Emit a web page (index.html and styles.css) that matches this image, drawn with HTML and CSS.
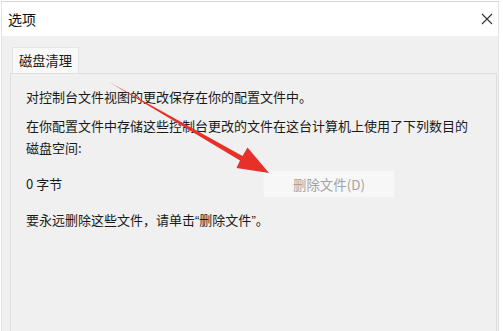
FILE: index.html
```html
<!DOCTYPE html>
<html lang="zh-CN">
<head>
    <meta charset="UTF-8">
    <title>选项</title>
    <link rel="stylesheet" href="styles.css">
</head>
<body>
    <div class="window">
        <div class="titlebar">
            <span class="title">选项</span>
            <svg class="close" width="12" height="12" viewBox="0 0 12 12">
                <path d="M1 1 L11 11 M11 1 L1 11" stroke="#333" stroke-width="1.1" fill="none"/>
            </svg>
        </div>

        <div class="content">
            <div class="tabs">
                <div class="tab">磁盘清理</div>
            </div>
            <div class="panel">
                <p>对控制台文件视图的更改保存在你的配置文件中。</p>
                <p class="gap">在你配置文件中存储这些控制台更改的文件在这台计算机上使用了下列数目的磁盘空间:</p>
                <div class="size-row">
                    <span>0 字节</span>
                    <button disabled>删除文件(D)</button>
                </div>
                <p>要永远删除这些文件，请单击<span class="q">“</span>删除文件<span class="q">”</span>。</p>
            </div>
        </div>

        <!-- annotation arrow drawn over the dialog -->
        <svg class="arrow" width="503" height="331" viewBox="0 0 503 331">
            <polygon points="108,82 241.5,156 246.5,147.5 268,173 235.5,168 239,160.5" fill="#e8302a"/>
        </svg>
    </div>
</body>
</html>
```

FILE: styles.css
```css
body {
    margin: 0;
    background-color: #fff;
    font-family: "Noto Sans CJK SC", "Microsoft YaHei", sans-serif;
    color: #1a1a1a;
    overflow: hidden;
}

.window {
    position: relative;
    margin: 1px 4px 0 1px;
    border-top: 1px solid #d4d4d4;
    border-left: 1px solid #e2e2e2;
    border-right: 1px solid #e2e2e2;
    height: 340px;
    display: flex;
    flex-direction: column;
}

.titlebar {
    height: 34px;
    background-color: #fff;
    display: flex;
    align-items: center;
    justify-content: space-between;
    padding: 0 5px 0 6px;
}

.title {
    font-size: 14px;
    color: #111;
}

.content {
    flex: 1;
    background-color: #f0f0f0;
    padding: 11px 1px 0 8px;
}

.tabs {
    display: flex;
    padding-left: 2px;
}

.tab {
    background-color: #f8f8f8;
    border: 1px solid #e4e4e4;
    border-bottom: none;
    height: 25px;
    width: 65px;
    font-size: 13.3px;
    line-height: 25px;
    text-align: center;
}

.panel {
    border: 1px solid #dedede;
    background-color: #f0f0f0;
    height: 250px;
    padding: 12px 10px 0 15px;
    font-size: 13px;
    line-height: 22px;
}

.panel p {
    margin: 0;
}

.panel .gap {
    margin-top: 7px;
    width: 448px;
}

.panel .q {
    font-family: "Liberation Sans", sans-serif;
}

.size-row {
    display: grid;
    grid-template-columns: 237px 132px;
    align-items: center;
    margin: 11px 0;
}

.size-row button {
    height: 28px;
    background-color: #f7f7f7;
    border: 1px solid #f2f2f2;
    color: #a3a3a3;
    font-family: inherit;
    font-size: 13.4px;
}

.arrow {
    position: absolute;
    left: -1px;
    top: -2px;
    pointer-events: none;
}
```
